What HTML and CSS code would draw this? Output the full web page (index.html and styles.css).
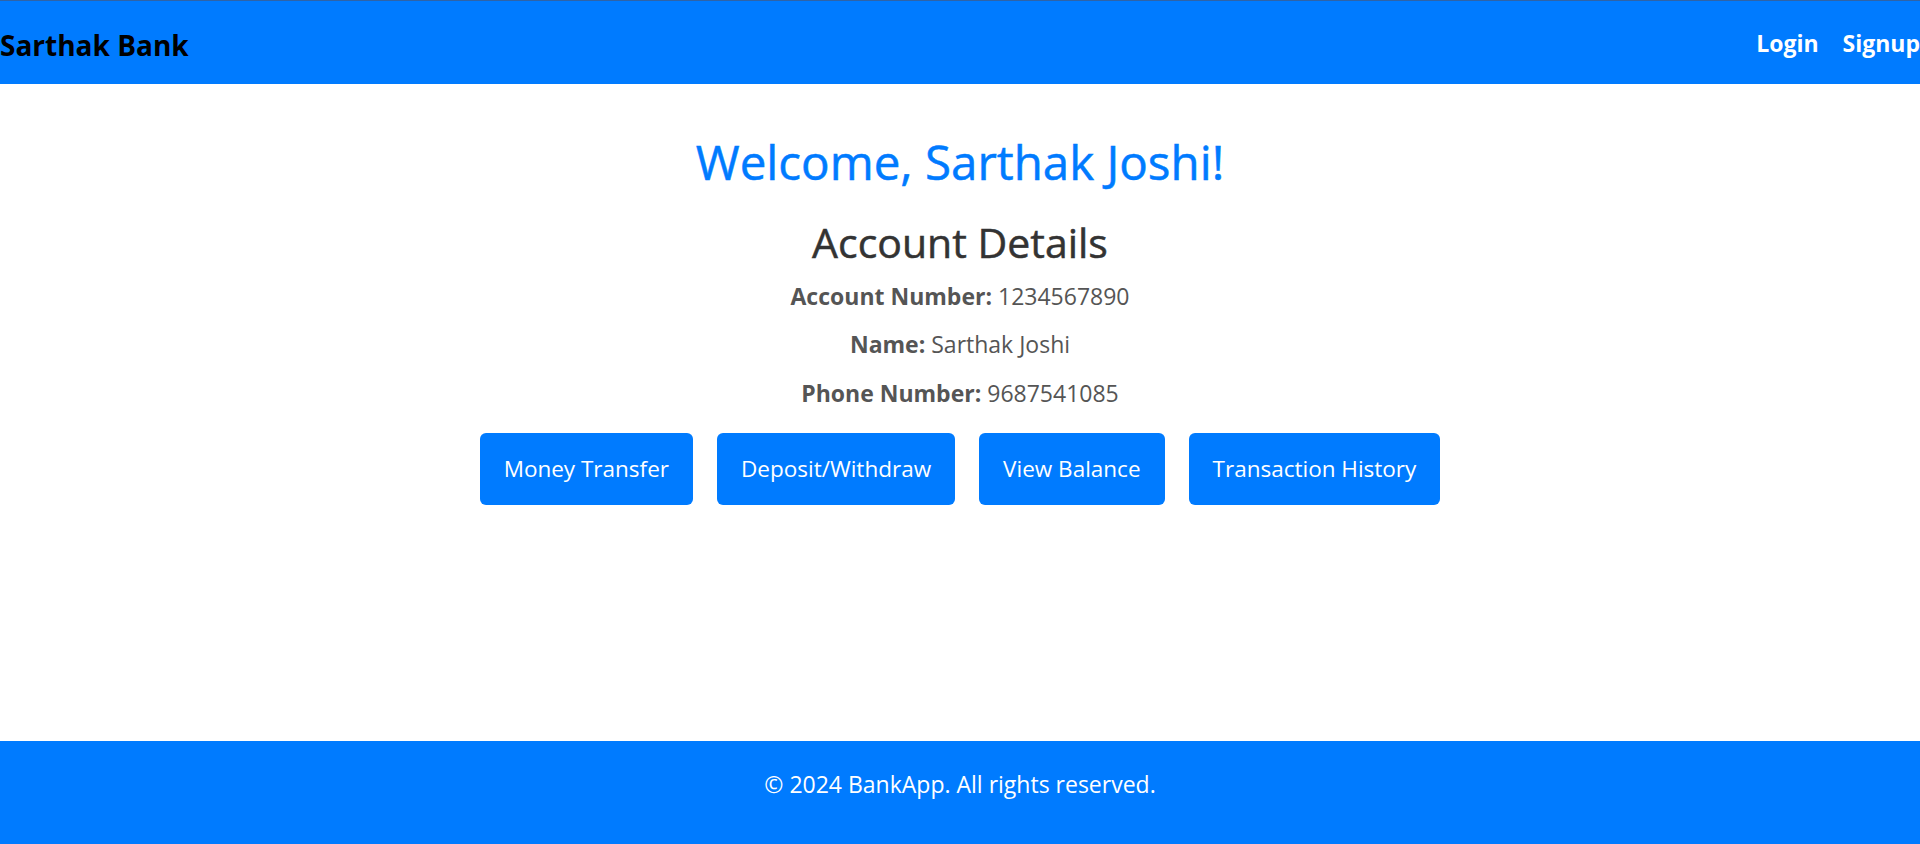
FILE: index.html
```html
<!DOCTYPE html>
<html lang="en">
<head>
<meta charset="utf-8">
<title>Sarthak Bank</title>
<link rel="stylesheet" href="styles.css">
</head>
<body>
<header class="topbar">
  <div class="brand">Sarthak Bank</div>
  <nav class="nav">
    <a href="#" class="nav-link">Login</a>
    <a href="#" class="nav-link">Signup</a>
  </nav>
</header>
<main class="content">
  <h1 class="welcome">Welcome, Sarthak Joshi!</h1>
  <h2 class="section-title">Account Details</h2>
  <p class="detail"><strong>Account Number:</strong> 1234567890</p>
  <p class="detail"><strong>Name:</strong> Sarthak Joshi</p>
  <p class="detail"><strong>Phone Number:</strong> 9687541085</p>
  <div class="actions">
    <a href="#" class="btn">Money Transfer</a>
    <a href="#" class="btn">Deposit/Withdraw</a>
    <a href="#" class="btn">View Balance</a>
    <a href="#" class="btn">Transaction History</a>
  </div>
</main>
<footer class="footer">
  <p class="footer-text">&copy; 2024 BankApp. All rights reserved.</p>
</footer>
</body>
</html>
```
FILE: styles.css
```css
html, body {
  margin: 0;
  padding: 0;
}
body {
  font-family: "Open Sans", "Noto Sans", sans-serif;
  min-height: 100vh;
  display: flex;
  flex-direction: column;
  overflow-x: hidden;
  background: #fff;
  color: #333;
}
.topbar {
  box-sizing: border-box;
  height: 84px;
  background: #007bff;
  border-top: 1px solid #2f63a6;
  display: flex;
  align-items: center;
  justify-content: space-between;
}
.brand {
  font-size: 28px;
  font-weight: 700;
  color: #000;
  padding-top: 4px;
}
.nav {
  display: flex;
  gap: 24px;
  margin-right: 0;
}
.nav-link {
  color: #fff;
  font-weight: 700;
  font-size: 23px;
  text-decoration: none;
}
.content {
  flex: 1;
  text-align: center;
  padding-top: 49px;
}
.welcome {
  margin: 0;
  font-size: 47.5px;
  line-height: 57.6px;
  font-weight: 400;
  -webkit-text-stroke: 0.5px #007bff;
  color: #007bff;
}
.section-title {
  margin: 27px 0 0;
  font-size: 41px;
  line-height: 48px;
  font-weight: 400;
  -webkit-text-stroke: 0.5px #333;
  color: #333;
}
.detail {
  margin: 13px 0 0;
  font-size: 23px;
  line-height: 35.5px;
  color: #555;
}
.detail strong {
  font-weight: 700;
}
.actions {
  display: flex;
  justify-content: center;
  gap: 24px;
  margin-top: 21.5px;
}
.btn {
  display: block;
  background: #007bff;
  color: #fff;
  text-decoration: none;
  font-size: 22.5px;
  line-height: 35px;
  padding: 18.5px 24px;
  border-radius: 6px;
}
.footer {
  background: #007bff;
  height: 103px;
  box-sizing: border-box;
  padding-top: 25px;
  text-align: center;
}
.footer-text {
  margin: 0;
  color: #fff;
  font-size: 23px;
  line-height: 36px;
}
```
